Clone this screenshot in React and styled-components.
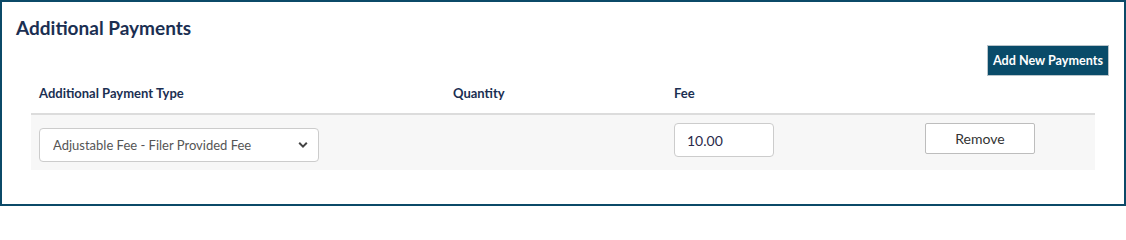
import React, { useState } from "react"
import styled, { createGlobalStyle } from "styled-components"

const GlobalStyle = createGlobalStyle`
    html, body {
        margin: 0;
        padding: 0;
        background: #fff;
        font-family: Lato, "Open Sans", sans-serif;
    }
    * {
        box-sizing: border-box;
    }
`

const Panel = styled.section`
    width: 1126px;
    height: 206px;
    border: 2px solid #0b4a68;
    padding: 15px 15px 0 14px;
    display: flex;
    flex-direction: column;
`

const Title = styled.h2`
    margin: 0;
    font-size: 19px;
    line-height: 22px;
    font-weight: 700;
    color: #1b2f52;
`

const Toolbar = styled.div`
    display: flex;
    justify-content: flex-end;
    margin-top: 6px;
`

const PrimaryButton = styled.button`
    width: 122px;
    height: 31px;
    padding: 0;
    background-color: #094b69;
    color: #fff;
    border: 1px solid #b9c4ca;
    border-radius: 0;
    font-family: inherit;
    font-size: 12.6px;
    font-weight: 700;
    white-space: nowrap;
    cursor: pointer;
`

const Table = styled.div`
    margin: 0 14px 0 15px;
    display: grid;
    grid-template-columns: 414px 221px 251px 1fr;
`

const HeadCell = styled.div`
    height: 39px;
    padding: 0 8px 10px;
    display: flex;
    align-items: flex-end;
    font-size: 13px;
    line-height: 20px;
    font-weight: 700;
    color: #1b2f52;
    border-bottom: 2px solid #dcdcdc;
`

const Cell = styled.div`
    height: 55px;
    padding: 8px;
    background-color: #f7f7f7;
`

const SelectWrap = styled.div`
    position: relative;
    width: 280px;
    margin-top: 5px;
`

const Select = styled.select`
    appearance: none;
    width: 100%;
    height: 34px;
    padding: 0 30px 0 13px;
    border: 1px solid #cccccc;
    border-radius: 4px;
    background: #fff;
    font-family: inherit;
    font-size: 13px;
    color: #555;
`

const Chevron = styled.svg`
    position: absolute;
    right: 11px;
    top: 13px;
    pointer-events: none;
`

const TextInput = styled.input`
    width: 100px;
    height: 34px;
    padding: 0 12px;
    border: 1px solid #cccccc;
    border-radius: 4px;
    background: #fff;
    font-family: inherit;
    font-size: 14px;
    color: #2a2a4a;
`

const GhostButton = styled.button`
    width: 110px;
    height: 31px;
    padding: 0;
    background: #fff;
    border: 1px solid #bdbdbd;
    border-radius: 2px;
    font-family: inherit;
    font-size: 14px;
    color: #333;
    cursor: pointer;
`

const App = () => {
    const [paymentType, setPaymentType] = useState("adjustable")
    const [fee, setFee] = useState("10.00")

    return (
        <>
            <GlobalStyle />
            <Panel>
                <Title>Additional Payments</Title>
                <Toolbar>
                    <PrimaryButton>Add New Payments</PrimaryButton>
                </Toolbar>
                <Table>
                    <HeadCell>Additional Payment Type</HeadCell>
                    <HeadCell>Quantity</HeadCell>
                    <HeadCell>Fee</HeadCell>
                    <HeadCell />

                    <Cell>
                        <SelectWrap>
                            <Select value={paymentType} onChange={(e) => setPaymentType(e.target.value)}>
                                <option value="adjustable">Adjustable Fee - Filer Provided Fee</option>
                            </Select>
                            <Chevron width="10" height="8" viewBox="0 0 10 8">
                                <path d="M1.2 1.8 L5 5.6 L8.8 1.8" fill="none" stroke="#444" strokeWidth="2" />
                            </Chevron>
                        </SelectWrap>
                    </Cell>
                    <Cell />
                    <Cell>
                        <TextInput value={fee} onChange={(e) => setFee(e.target.value)} />
                    </Cell>
                    <Cell>
                        <GhostButton>Remove</GhostButton>
                    </Cell>
                </Table>
            </Panel>
        </>
    )
}

export default App
